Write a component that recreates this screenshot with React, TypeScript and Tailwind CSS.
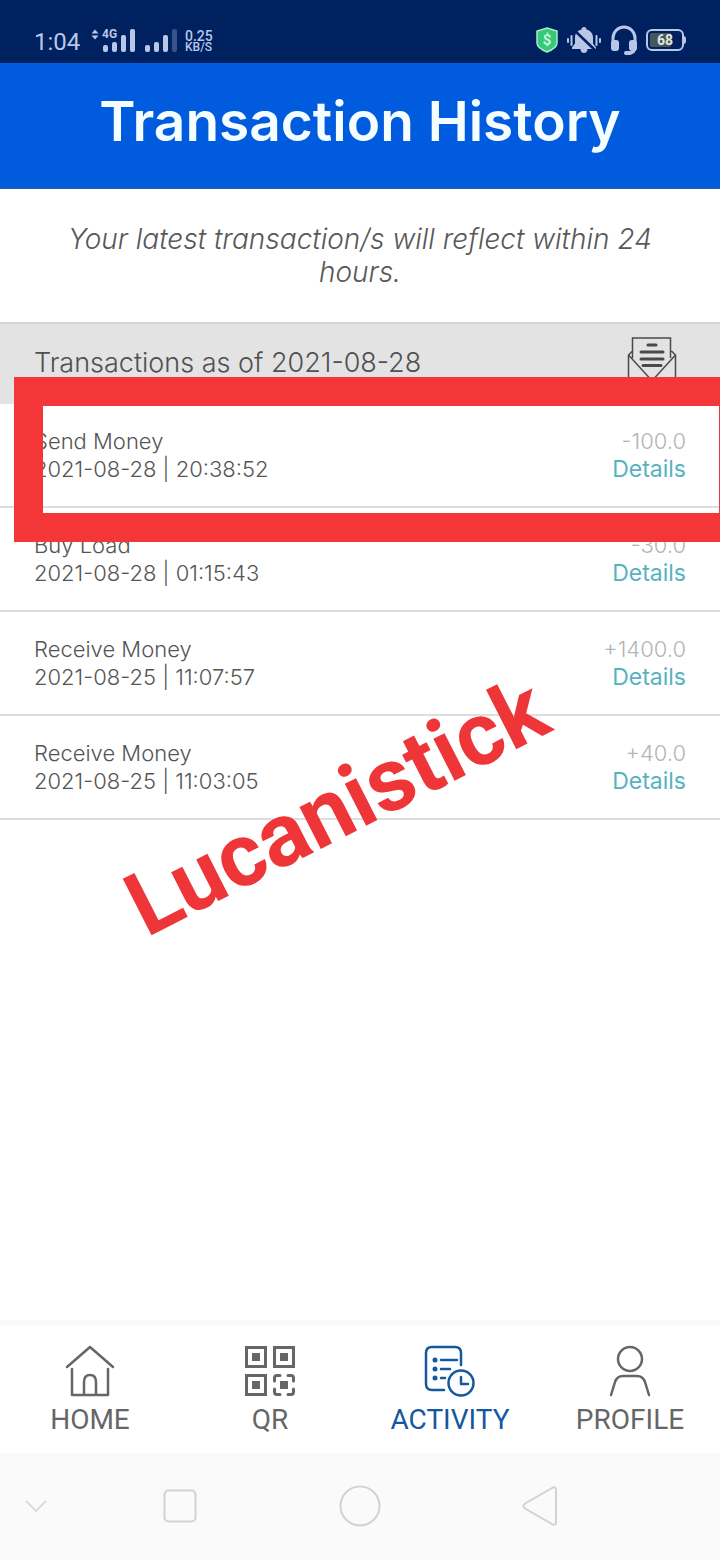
interface Transaction {
  title: string;
  date: string;
  amount: string;
  marked?: boolean;
}

const transactions: Transaction[] = [
  {
    title: "Send Money",
    date: "2021-08-28 | 20:38:52",
    amount: "-100.0",
    marked: true,
  },
  { title: "Buy Load", date: "2021-08-28 | 01:15:43", amount: "-30.0" },
  { title: "Receive Money", date: "2021-08-25 | 11:07:57", amount: "+1400.0" },
  { title: "Receive Money", date: "2021-08-25 | 11:03:05", amount: "+40.0" },
];

const App: React.FC = () => (
  <div className="relative flex flex-col min-h-screen overflow-hidden bg-white font-['Inter',sans-serif]">
    <StatusBar />
    <header className="h-[126px] pt-[26px] text-center bg-[#005bdf] border-b-2 border-b-[#1a5cb0]">
      <h1 className="text-[55px] leading-[64px] font-semibold text-[#f4fdff]">
        Transaction History
      </h1>
    </header>
    <main className="flex-1">
      <p className="px-12 pt-[34px] pb-[33px] text-[28px] leading-[33px] italic font-light text-center text-[#585858]">
        Your latest transaction/s will reflect within 24 hours.
      </p>
      <section className="relative">
        <div className="flex justify-between h-[82px] px-[34px] bg-[#e3e3e3] border-t-2 border-t-[#d3d3d3]">
          <h2 className="pt-[22px] text-[27px] leading-[33px] font-light text-[#505050]">
            Transactions as of 2021-08-28
          </h2>
          <button
            type="button"
            aria-label="Email transactions"
            className="self-start mt-[13px] mr-[9px]"
          >
            <EnvelopeIcon />
          </button>
        </div>
        <ul>
          {transactions.map((transaction) => (
            <Row key={transaction.date} transaction={transaction} />
          ))}
        </ul>
        <Watermark />
      </section>
    </main>
    <TabBar />
    <SystemBar />
  </div>
);

export default App;

/*******************
 * Components
 */

const Row: React.FC<{ transaction: Transaction }> = ({ transaction }) => (
  <li className="relative flex justify-between px-[34px] py-[23px] text-[22px] leading-[28px] font-light border-b-2 border-b-[#dedede]">
    <div className="text-[#555555]">
      <p>{transaction.title}</p>
      <p>{transaction.date}</p>
    </div>
    <div className="text-right">
      <p className="text-[#b5b5b5]">{transaction.amount}</p>
      <a href="#details" className="block text-[23px] font-normal text-[#57b2c0]">
        Details
      </a>
    </div>
    {transaction.marked && (
      <div className="absolute z-10 -top-[27px] -bottom-[36px] left-[14px] -right-[28px] border-[29px] border-[#f43638] pointer-events-none" />
    )}
  </li>
);

const Watermark = () => (
  <p className="absolute left-[108px] top-[433px] -rotate-27 whitespace-nowrap pointer-events-none text-[89px] leading-[104px] font-bold text-[#ee3639] font-['Roboto',sans-serif]">
    Lucanistick
  </p>
);

const StatusBar = () => (
  <div className="flex items-end justify-between h-[63px] pl-[34px] pr-[34px] pb-[7px] bg-[#00215f] text-[#b9c6e8] font-['Roboto',sans-serif]">
    <div className="flex items-center h-7">
      <span className="w-14 text-[24px] leading-7">1:04</span>
      <svg width="88" height="28" viewBox="0 0 88 28" fill="currentColor">
        <path d="M1.500 5.500 5 1.500l3.500 4zM1.500 7.500h7L5 11.500z" />
        <text x="12" y="10" fontSize="12" fontWeight="700">
          4G
        </text>
        <rect x="13" y="17" width="5" height="7" rx="2" />
        <rect x="22" y="14" width="5" height="10" rx="2" />
        <rect x="31" y="7" width="5" height="17" rx="2" />
        <rect x="40" y="1" width="5" height="23" rx="2" />
        <rect x="55" y="17" width="5" height="7" rx="2" />
        <rect x="64" y="14" width="5" height="10" rx="2" />
        <rect x="73" y="7" width="5" height="17" rx="2" />
        <rect x="82" y="1" width="5" height="23" rx="2" opacity="0.3" />
      </svg>
      <div className="ml-[7px] text-[12px] leading-[11px] font-medium">
        <p className="text-[14px]">0.25</p>
        <p>KB/S</p>
      </div>
    </div>
    <div className="flex items-center h-8 gap-2">
      <svg width="22" height="26" viewBox="0 0 22 26">
        <path
          d="M11 1 21 4v12c0 4-5 7-10 9C6 23 1 20 1 16V4z"
          fill="#35c979"
          stroke="#a9ecca"
          strokeWidth="1.500"
        />
        <text
          x="11"
          y="18"
          fontSize="15"
          fontWeight="700"
          textAnchor="middle"
          fill="#c9f5dd"
        >
          $
        </text>
      </svg>
      <svg width="36" height="28" viewBox="0 0 36 28" fill="currentColor">
        <path d="M18 1c1.500 0 2.500 1 2.500 2.500 4 1 6.500 4 6.500 8v6l3 4v1.500H6v-1.500l3-4v-6c0-4 2.500-7 6.500-8C15.500 2 16.500 1 18 1zM14.500 23h7c0 2.500-1.500 4-3.500 4s-3.500-1.500-3.500-4z" />
        <path d="M7 3 30 25" stroke="#00215f" strokeWidth="2.500" />
        <path
          d="M2 13v3M5.500 10v9M30.500 10v9M34 13v3"
          stroke="currentColor"
          strokeWidth="2"
          strokeLinecap="round"
        />
      </svg>
      <svg width="28" height="32" viewBox="0 0 28 32" fill="currentColor">
        <path
          d="M3 18v-4a11 11 0 0 1 22 0v9c0 4-2 6-6 6h-3"
          fill="none"
          stroke="currentColor"
          strokeWidth="3"
        />
        <rect x="1" y="16" width="8" height="11" rx="3" />
        <rect x="19" y="16" width="8" height="11" rx="3" />
        <rect x="14" y="27" width="8" height="4" rx="2" />
      </svg>
      <svg width="40" height="22" viewBox="0 0 40 22">
        <rect
          x="1"
          y="1"
          width="36"
          height="20"
          rx="5"
          fill="none"
          stroke="currentColor"
          strokeWidth="2"
        />
        <rect x="4" y="4" width="21" height="14" rx="2" fill="#45565c" />
        <path d="M38 7c3 1 3 7 0 8z" fill="currentColor" />
        <text
          x="19"
          y="16"
          fontSize="14"
          fontWeight="700"
          textAnchor="middle"
          fill="#e2e8dc"
        >
          68
        </text>
      </svg>
    </div>
  </div>
);

const EnvelopeIcon = () => (
  <svg
    width="50"
    height="50"
    viewBox="0 0 50 50"
    fill="none"
    stroke="#4a4a4a"
    strokeWidth="1.500"
  >
    <path d="M5.500 21V1h38v20M5.500 14l-4 4v31h47V18l-4-4M1.500 18l21 23q2.500 2 5 0l21-23" />
    <path
      d="M21 8h8M14 15h22M14 22h22M16 28.500h18"
      strokeWidth="3"
      strokeLinecap="round"
    />
  </svg>
);

const Tab = (props: {
  label: string;
  active?: boolean;
  children: React.ReactNode;
}) => (
  <a
    href={`#${props.label.toLowerCase()}`}
    aria-current={props.active ? "page" : undefined}
    className={
      props.active
        ? "flex flex-col items-center text-[#1459a0]"
        : "flex flex-col items-center text-[#666666]"
    }
  >
    <svg
      width="52"
      height="52"
      viewBox="0 0 52 52"
      fill="none"
      stroke="currentColor"
      strokeWidth="2"
      strokeLinecap="round"
      strokeLinejoin="round"
    >
      {props.children}
    </svg>
    <span className="mt-[7px] text-[28px] leading-8">{props.label}</span>
  </a>
);

const TabBar = () => (
  <nav className="grid grid-cols-4 h-[133px] pt-[19px] bg-white border-t-6 border-t-[#f9f9f9] font-['Roboto',sans-serif]">
    <Tab label="HOME">
      <path
        d="M3 22 26 2l23 20M8 24v26h36V24M20 50V37q0-7 6-7t6 7v13"
        strokeWidth="2.500"
      />
    </Tab>
    <Tab label="QR">
      <path
        d="M2.500 2.500h19v19h-19zM30.500 2.500h19v19h-19zM2.500 30.500h19v19h-19z"
        strokeWidth="3"
        strokeLinejoin="miter"
      />
      <path
        d="M30.500 36v-3q0-2.500 2.500-2.500h3M44 30.500h3q2.500 0 2.500 2.500v3M49.500 44v3q0 2.500-2.500 2.500h-3M36 49.500h-3q-2.500 0-2.500-2.500v-3"
        strokeWidth="3"
      />
      <path
        d="M8 8h8v8H8zM36 8h8v8h-8zM8 36h8v8H8zM36 36h8v8h-8z"
        fill="currentColor"
        stroke="none"
      />
    </Tab>
    <Tab label="ACTIVITY" active>
      <path
        d="M20 45H8q-6 0-6-6V8q0-6 6-6h23q6 0 6 6v12M17 15h16M17 24h9M17 33h4"
        strokeWidth="2.500"
      />
      <circle cx="37" cy="38" r="12.500" strokeWidth="2.500" />
      <path d="M37 32v7h7" strokeWidth="2.500" />
      <g fill="currentColor" stroke="none">
        <circle cx="11" cy="15" r="2.500" />
        <circle cx="11" cy="24" r="2.500" />
        <circle cx="11" cy="33" r="2.500" />
      </g>
    </Tab>
    <Tab label="PROFILE">
      <circle cx="26" cy="14" r="12" strokeWidth="2.500" />
      <path d="M7 50l4-13q2-6 8-6h14q6 0 8 6l4 13" strokeWidth="2.500" />
    </Tab>
  </nav>
);

const SystemBar = () => (
  <div className="grid grid-cols-8 items-center h-[107px] pb-0.5 bg-[#fafafa] text-[#d2d2d2]">
    <button type="button" aria-label="Hide bar" className="pl-6">
      <svg width="24" height="14" viewBox="0 0 24 14" fill="none">
        <path d="M2 2l10 10L22 2" stroke="currentColor" strokeWidth="1.500" />
      </svg>
    </button>
    <SystemButton label="Recent apps">
      <rect x="5.500" y="5.500" width="31" height="31" rx="4" />
    </SystemButton>
    <SystemButton label="Home screen">
      <circle cx="21" cy="21" r="19.500" />
    </SystemButton>
    <SystemButton label="Back">
      <path d="M34 2.500 6 18.500q-3 2.500 0 5L34 39.500q3 1 3-2v-33q0-3-3-2z" />
    </SystemButton>
  </div>
);

const SystemButton = (props: { label: string; children: React.ReactNode }) => (
  <button
    type="button"
    aria-label={props.label}
    className="flex justify-center col-span-2"
  >
    <svg
      width="42"
      height="42"
      viewBox="0 0 42 42"
      fill="none"
      stroke="currentColor"
      strokeWidth="2"
    >
      {props.children}
    </svg>
  </button>
);
